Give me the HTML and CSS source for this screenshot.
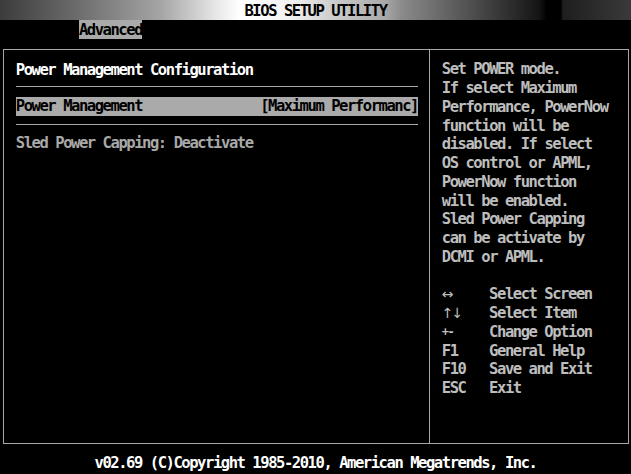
FILE: index.html
```html
<!DOCTYPE html>
<html>

<head>
  <title>BIOS Setup Utility</title>
  <meta name="viewport" content="width=device-width, initial-scale=1.0">
  <link rel="stylesheet" href="styles.css">
</head>

<body>
  <div class="screen">
    <div class="title-bar">
      <span class="title">BIOS SETUP UTILITY</span>
    </div>

    <div class="tabs">
      <span class="tab active">Advanced</span>
    </div>

    <div class="frame">
      <!-- left: settings list -->
      <div class="settings">
        <div class="row heading">Power Management Configuration</div>
        <div class="rule top"></div>
        <div class="row item selected">
          <span>Power Management</span>
          <span>[Maximum Performanc]</span>
        </div>
        <div class="rule bottom"></div>
        <div class="row info">Sled Power Capping: Deactivate</div>
      </div>

      <!-- right: help + keys -->
      <div class="help">
        <div class="help-text">
          <div>Set POWER mode.</div>
          <div>If select Maximum</div>
          <div>Performance, PowerNow</div>
          <div>function will be</div>
          <div>disabled. If select</div>
          <div>OS control or APML,</div>
          <div>PowerNow function</div>
          <div>will be enabled.</div>
          <div>Sled Power Capping</div>
          <div>can be activate by</div>
          <div>DCMI or APML.</div>
        </div>

        <div class="keys">
          <span class="key arrow">&#8596;</span><span>Select Screen</span>
          <span class="key arrow">&#8593;&#8595;</span><span>Select Item</span>
          <span class="key small">+-</span><span>Change Option</span>
          <span class="key">F1</span><span>General Help</span>
          <span class="key">F10</span><span>Save and Exit</span>
          <span class="key">ESC</span><span>Exit</span>
        </div>
      </div>
    </div>

    <div class="footer">v02.69 (C)Copyright 1985-2010, American Megatrends, Inc.</div>
  </div>
</body>
</html>
```

FILE: styles.css
```css
/* variables */
:root {
  --row: 18.75px;
  --line-color: #a8a8a8;
  --text-color: #bdbdbd;
  --dim-color: #a8a8a8;
  --bright-color: #ffffff;
  --select-bg: #aaaaaa;
}

/* global & fonts */
* {
  box-sizing: border-box;
}

body,
html {
  margin: 0;
  padding: 0;
  overflow: hidden;
  background: #000;
}

.screen {
  width: 631px;
  height: 474px;
  display: flex;
  flex-direction: column;
  font-family: "DejaVu Sans Mono", "Liberation Mono", monospace;
  font-size: 15.5px;
  font-weight: bold;
  letter-spacing: -1.44px;
  line-height: var(--row);
  color: var(--text-color);
  white-space: nowrap;
}

/* title bar */
.title-bar {
  flex: none;
  height: 20px;
  line-height: 23px;
  text-align: center;
  overflow: hidden;
  color: #000;
  background: linear-gradient(to right,
      #3c3c3c 0%,
      #6e6e6e 12.7%,
      #a5a5a5 25.5%,
      #e8e8e8 34.4%,
      #ffffff 38%,
      #f2f2f2 46%,
      #d0d0d0 52%,
      #a8a8a8 61%,
      #8a8a8a 63.7%,
      #454545 76.5%,
      #151515 85.4%,
      #000000 86.7%,
      #000000 88.9%,
      #1e1e1e 89.2%,
      #3a3a3a 100%);
}

/* tabs */
.tabs {
  flex: none;
  height: 19px;
  padding-left: 78.9px;
  line-height: 20px;
}

.tab {
  display: inline-block;
  width: 63.1px;
  height: 19px;
}

.tab.active {
  background: var(--select-bg);
  color: #000;
}

/* main frame */
.frame {
  flex: none;
  display: flex;
  margin: 10px 0 0 3px;
  width: 626px;
  height: 395px;
  border: 1px solid var(--line-color);
}

.settings {
  width: 426px;
  padding: 10.6px 11px 0 11.8px;
  border-right: 1px solid var(--line-color);
}

.row {
  height: var(--row);
}

.heading {
  color: var(--bright-color);
}

.rule {
  height: 1px;
  background: var(--line-color);
}

.rule.top {
  margin: 6.6px 0 10px;
}

.rule.bottom {
  margin: 8.2px 0 9px;
}

.item {
  display: flex;
  justify-content: space-between;
}

.selected {
  background: var(--select-bg);
  color: #000;
}

.info {
  color: var(--dim-color);
}

/* help column */
.help {
  flex: 1;
  padding: 10.4px 0 0 11.8px;
}

.keys {
  display: grid;
  grid-template-columns: 47.3px 1fr;
  margin-top: var(--row);
}

.key.arrow {
  font-family: "DejaVu Sans", sans-serif;
  font-size: 14px;
  font-weight: normal;
  letter-spacing: -2px;
}

.key.small {
  font-size: 12px;
}

/* footer */
.footer {
  flex: none;
  margin-top: 10px;
  text-align: center;
  color: var(--bright-color);
}
```
